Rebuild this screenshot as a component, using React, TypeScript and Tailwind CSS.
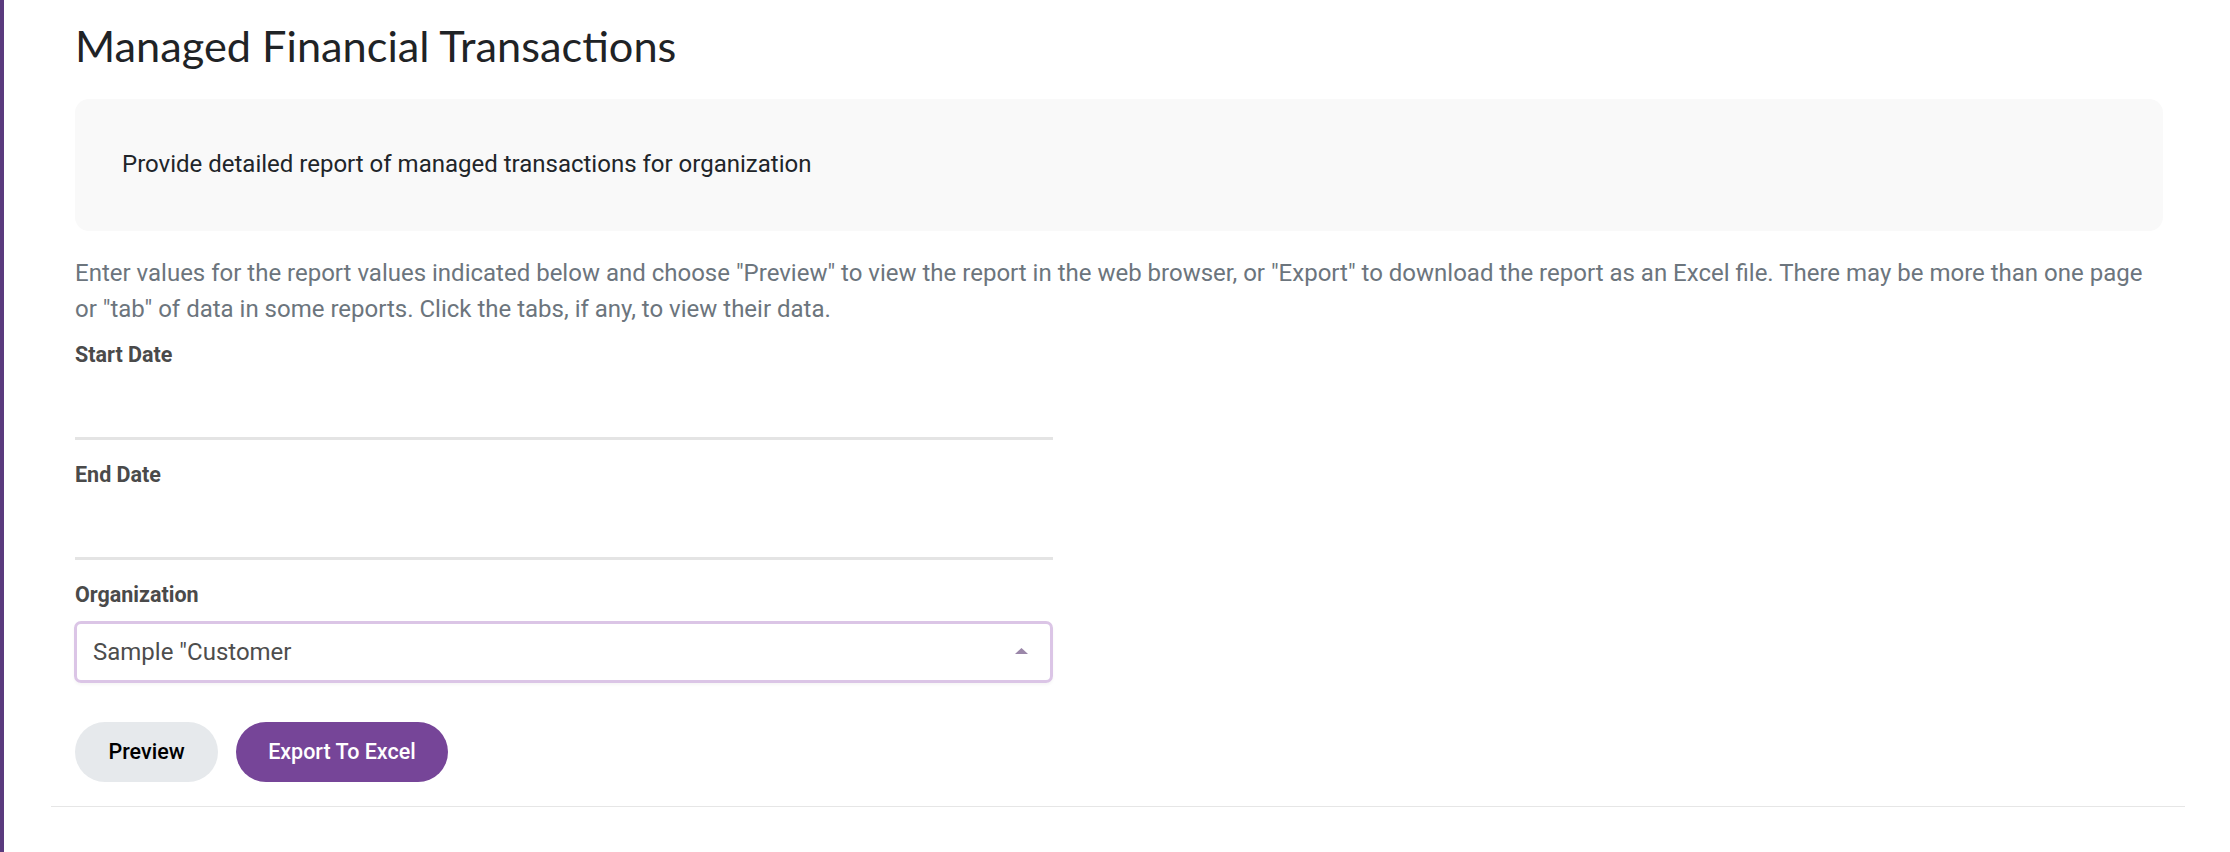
import React from 'react';

const fields = ['Start Date', 'End Date'];

function DateField({ label }: { label: string }) {
  return (
    <div className="mb-[19px]">
      <label className="block text-[21.5px] leading-[1.5] font-bold text-[#4a4a4a]">{label}</label>
      <div className="mt-[7px] h-[62px] w-[978px] border-b-[3px] border-[#e4e4e4]" />
    </div>
  );
}

export default function App() {
  return (
    <div className="flex min-h-screen bg-white font-['Roboto',_'Liberation_Sans',_sans-serif]">
      <div className="w-1 shrink-0 bg-[#5a3a7e]" />
      <main className="flex-1 pl-[47px] pr-[45px]">
        <section className="border-b-[1.5px] border-[#e6e6e6] pl-[24px] pr-[22px] pb-[24px]">
          <h1 className="pt-[20px] font-['Lato',_sans-serif] text-[43.3px] leading-[1.2] font-normal text-[#1f2326]">
            Managed Financial Transactions
          </h1>

          <div className="mt-[27px] rounded-[14px] bg-[#f9f9f9] pl-[47px] pt-[47px] pb-[49px]">
            <p className="text-[24px] leading-[1.5] text-[#212529]">
              Provide detailed report of managed transactions for organization
            </p>
          </div>

          <p className="mt-[24px] text-[24px] leading-[1.5] text-[#6c757d]">
            Enter values for the report values indicated below and choose "Preview" to view the report in the web
            browser, or "Export" to download the report as an Excel file. There may be more than one page or "tab" of
            data in some reports. Click the tabs, if any, to view their data.
          </p>

          <div className="mt-[12px]">
            {fields.map((f) => (
              <DateField key={f} label={f} />
            ))}

            <label className="block text-[21.5px] leading-[1.5] font-bold text-[#4a4a4a]">Organization</label>
            <div className="mt-[9px] flex h-[62px] w-[979px] -ml-px items-center justify-between rounded-[7px] border-[3px] border-[#dbc5e6] pl-[16px] pr-[22px] shadow-[0_2px_3px_rgba(0,0,0,0.04)]">
              <span className="text-[24px] text-[#4d4d4d]">Sample "Customer</span>
              <svg width="13" height="6" viewBox="0 0 13 6" className="mb-[2px]">
                <polygon points="6.5,0 13,6 0,6" fill="#9b87a9" />
              </svg>
            </div>
          </div>

          <div className="mt-[39px] flex gap-[18px]">
            <button className="h-[60px] rounded-full bg-[#e6e9ec] px-[33.5px] text-[21.5px] font-medium text-black">
              Preview
            </button>
            <button className="h-[60px] rounded-full bg-[#764598] px-[32px] text-[21.5px] font-medium text-white">
              Export To Excel
            </button>
          </div>
        </section>
      </main>
    </div>
  );
}
